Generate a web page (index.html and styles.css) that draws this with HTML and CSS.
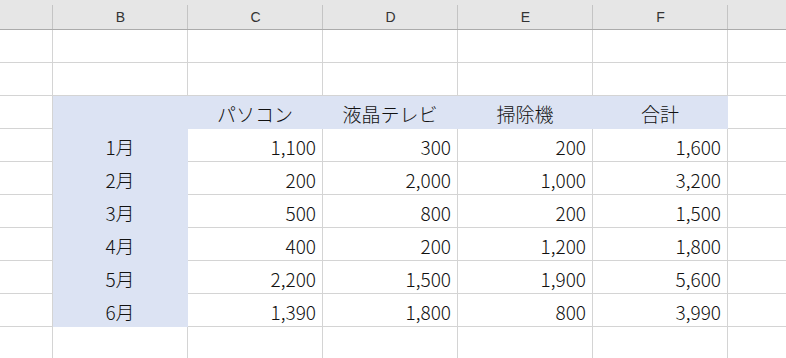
FILE: index.html
```html
<!DOCTYPE html>
<html lang="ja">
<head>
<meta charset="utf-8">
<link rel="stylesheet" href="styles.css">
</head>
<body>
<div class="sheet">
  <div class="hd"></div><div class="hd">B</div><div class="hd">C</div><div class="hd">D</div><div class="hd">E</div><div class="hd">F</div><div class="hd last"></div>

  <div class="c"></div><div class="c"></div><div class="c"></div><div class="c"></div><div class="c"></div><div class="c"></div><div class="c last"></div>
  <div class="c"></div><div class="c"></div><div class="c"></div><div class="c"></div><div class="c"></div><div class="c"></div><div class="c last"></div>

  <div class="c"></div><div class="c fill"></div><div class="c fill ctr">パソコン</div><div class="c fill ctr">液晶テレビ</div><div class="c fill ctr">掃除機</div><div class="c fill ctr">合計</div><div class="c last"></div>

  <div class="c"></div><div class="c fill ctr">1月</div><div class="c num">1,100</div><div class="c num">300</div><div class="c num">200</div><div class="c num">1,600</div><div class="c last"></div>
  <div class="c"></div><div class="c fill ctr">2月</div><div class="c num">200</div><div class="c num">2,000</div><div class="c num">1,000</div><div class="c num">3,200</div><div class="c last"></div>
  <div class="c"></div><div class="c fill ctr">3月</div><div class="c num">500</div><div class="c num">800</div><div class="c num">200</div><div class="c num">1,500</div><div class="c last"></div>
  <div class="c"></div><div class="c fill ctr">4月</div><div class="c num">400</div><div class="c num">200</div><div class="c num">1,200</div><div class="c num">1,800</div><div class="c last"></div>
  <div class="c"></div><div class="c fill ctr">5月</div><div class="c num">2,200</div><div class="c num">1,500</div><div class="c num">1,900</div><div class="c num">5,600</div><div class="c last"></div>
  <div class="c"></div><div class="c fill ctr">6月</div><div class="c num">1,390</div><div class="c num">1,800</div><div class="c num">800</div><div class="c num">3,990</div><div class="c last"></div>

  <div class="c"></div><div class="c"></div><div class="c"></div><div class="c"></div><div class="c"></div><div class="c"></div><div class="c last"></div>
</div>
</body>
</html>
```
FILE: styles.css
```css
html, body {
  margin: 0;
  padding: 0;
  background: #ffffff;
  overflow: hidden;
}
.sheet {
  display: grid;
  grid-template-columns: 53px 135px 135px 135px 135px 135px 1fr;
  grid-template-rows: 30px repeat(10, 33px);
  width: 786px;
  font-family: "Noto Sans CJK JP", "Noto Sans", sans-serif;
  font-weight: 300;
  color: #111111;
}
.hd {
  background: #e6e6e6;
  border-bottom: 1px solid #ababab;
  position: relative;
  display: flex;
  align-items: center;
  justify-content: center;
  font-family: "Liberation Sans", Arial, sans-serif;
  font-weight: 400;
  font-size: 14px;
  color: #333333;
  padding-top: 4px;
  box-sizing: border-box;
}
.hd::after {
  content: "";
  position: absolute;
  right: 0;
  top: 5px;
  bottom: 0;
  width: 1px;
  background: #c4c4c4;
}
.hd.last::after { display: none; }
.c {
  border-right: 1px solid #d4d4d4;
  border-bottom: 1px solid #d4d4d4;
  display: flex;
  align-items: center;
  font-size: 19px;
  line-height: 1;
  padding-top: 2px;
  box-sizing: border-box;
}
.c.last { border-right: none; }
.fill {
  background: #dce3f3;
  border-color: #dce3f3;
}
.ctr { justify-content: center; }
.num { justify-content: flex-end; padding-right: 6px; }
```
